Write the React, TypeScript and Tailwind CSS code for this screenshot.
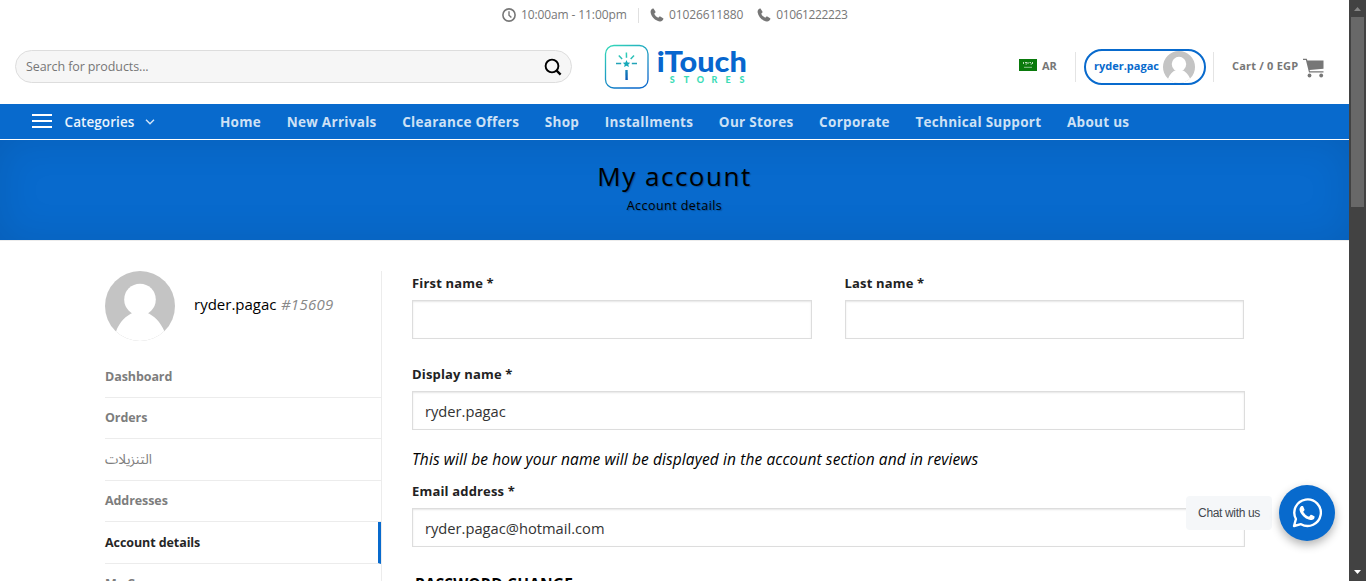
import type { ReactNode } from 'react';

const navItems = [
  'Home',
  'New Arrivals',
  'Clearance Offers',
  'Shop',
  'Installments',
  'Our Stores',
  'Corporate',
  'Technical Support',
  'About us',
];

const accountLinks = ['Dashboard', 'Orders', 'التنزيلات', 'Addresses', 'Account details', 'My Coupons'];

function Avatar({ className, id }: { className: string; id: string }) {
  return (
    <svg viewBox="0 0 70 70" className={className}>
      <clipPath id={id}>
        <circle cx="35" cy="35" r="35" />
      </clipPath>
      <g clipPath={`url(#${id})`}>
        <rect width="70" height="70" fill="#c4c4c4" />
        <circle cx="35" cy="28.500" r="15.800" fill="#fff" />
        <path d="M11 60.500C14.500 51 21 44.500 28.500 41.500h13C49 44.500 55.500 51 59.500 60.500L66 72H4z" fill="#fff" />
      </g>
    </svg>
  );
}

function Phone() {
  return (
    <svg viewBox="0 0 14 14" className="h-[14px] w-[14px] shrink-0" fill="#777">
      <path d="M2.9.6C1.300 1.300.4 2.500.6 4.300 1.200 8.800 5.200 12.800 9.700 13.400c1.800.2 3-.7 3.700-2.300.1-.4 0-.7-.3-.9L10.300 8.500c-.3-.2-.7-.1-.9.1L8.300 9.800C6.400 8.900 5.100 7.600 4.200 5.700l1.200-1.100c.2-.2.3-.6.1-.9L3.800.9C3.600.6 3.300.5 2.900.6z" />
    </svg>
  );
}

function Clock() {
  return (
    <svg viewBox="0 0 14 14" className="h-[14px] w-[14px] shrink-0" fill="none" stroke="#777">
      <circle cx="7" cy="7" r="6.100" strokeWidth="1.600" />
      <path d="M7 3.200V7.200L9.400 9.600" strokeWidth="1.400" />
    </svg>
  );
}

function Logo() {
  return (
    <svg viewBox="0 0 160 46" className="h-[46px] w-[160px]">
      <defs>
        <linearGradient id="frame" x1="0" y1="0" x2=".6" y2="1">
          <stop offset="0" stopColor="#35dcb8" />
          <stop offset="1" stopColor="#0b6acb" />
        </linearGradient>
        <linearGradient id="wand" x1="0" y1="7" x2="0" y2="37" gradientUnits="userSpaceOnUse">
          <stop offset="0" stopColor="#35dcb8" />
          <stop offset="1" stopColor="#0754b8" />
        </linearGradient>
      </defs>
      <rect x="1.500" y="1.500" width="42.500" height="42.500" rx="8.500" fill="none" stroke="url(#frame)" strokeWidth="1.300" />
      <g fill="none" stroke="url(#wand)" strokeWidth="1.500">
        <path d="M22.4 8.500L22.500 13.800M14.800 11.500l3.300 3.600M30 11.500l-3.300 3.600M12 19.500l5.200.1M27.800 19.500l5.200.1" />
        <path d="M22.500 26L22.600 36" strokeWidth="2.400" />
      </g>
      <path d="M22.500 16l1.100 2.400 2.600.3-1.900 1.700.6 2.600-2.400-1.300-2.400 1.300.6-2.600-1.900-1.700 2.600-.3z" fill="#17a9b9" />
      <text
        x="52.800"
        y="27.500"
        textLength="90"
        lengthAdjust="spacingAndGlyphs"
        fill="#0766ce"
        className="font-['Lato'] text-[27.500px] font-black"
      >
        iTouch
      </text>
      <g fill="#3bdcb6" textAnchor="middle" className="font-['Lato'] text-[9px] font-black">
        <text x="68.300" y="39">S</text>
        <text x="82.500" y="39">T</text>
        <text x="96.500" y="39">O</text>
        <text x="110.500" y="39">R</text>
        <text x="124" y="39">E</text>
        <text x="138" y="39">S</text>
      </g>
    </svg>
  );
}

function Flag() {
  return (
    <svg viewBox="0 0 18 12" className="h-3 w-[18px]">
      <rect width="18" height="12" fill="#0a7a0c" />
      <path d="M4.500 3v2M6 3.500h2M6.500 5h1.500M9 3v2M10.500 3.500h1.500M11.500 5h1.500M13.500 3v2" stroke="#cfe6cf" strokeWidth=".9" />
      <path d="M5 8.300h8" stroke="#b0d6b0" strokeWidth=".8" />
    </svg>
  );
}

function Cart() {
  return (
    <svg viewBox="0 0 21 20" className="h-5 w-[21px]" fill="#777">
      <path d="M0 .8h3.800l.6 1.700H20.500v8.300L6.600 12l.4 1.300h13.500v1.100H6L2.900 2H0z" />
      <circle cx="6.500" cy="17.500" r="1.900" />
      <circle cx="18.200" cy="17.500" r="1.900" />
    </svg>
  );
}

function TopBar() {
  return (
    <div className="flex h-[30px] items-center pl-[502px] text-[12px] tracking-[-0.110px] text-[#777]">
      <Clock />
      <span className="ml-[5px] w-[107px]">10:00am - 11:00pm</span>
      <span className="ml-[10px] h-[15px] w-px bg-[#e0e0e0]" />
      <span className="ml-[11px] flex items-center gap-[5px]">
        <Phone />
        01026611880
      </span>
      <span className="ml-[14px] flex items-center gap-[5px]">
        <Phone />
        <span className="tracking-[-0.400px]">01061222223</span>
      </span>
    </div>
  );
}

function Header() {
  return (
    <header className="flex h-[74px] items-center text-[11px] font-bold text-[#777]">
      <div className="-mt-px ml-[15px] flex h-[33px] w-[557px] items-center justify-between rounded-full border border-[#ddd] bg-[#f6f6f6] pr-[9px] pl-[10px]">
        <span className="pt-[2px] text-[12.5px] font-normal tracking-[-0.100px] text-[#777]">Search for products...</span>
        <svg viewBox="0 0 18 18" className="h-[18px] w-[18px]" fill="none" stroke="#000" strokeWidth="1.900">
          <circle cx="8" cy="8" r="6.400" />
          <path d="M12.600 12.600l4 4" strokeWidth="2.300" />
        </svg>
      </div>
      <div className="ml-[32px] w-[160px]">
        <Logo />
      </div>
      <div className="-mt-[2px] ml-[255px] flex w-[38px] items-center gap-[5px]">
        <span className="-mt-[2px]">
          <Flag />
        </span>
        AR
      </div>
      <span className="ml-[18px] h-[30px] w-px bg-[#e4e4e4]" />
      <div className="ml-[8px] flex h-[36px] w-[122px] items-center rounded-full border-2 border-[#086acd] pl-[8px] text-[#086acd]">
        <span className="-mt-[2px] w-[65px]">ryder.pagac</span>
        <Avatar id="avatar-small" className="ml-[4px] h-8 w-8" />
      </div>
      <span className="ml-[7px] h-[30px] w-px bg-[#e4e4e4]" />
      <span className="-mt-[2px] ml-[18px] w-[67px] tracking-[0.200px] whitespace-nowrap">Cart / 0 EGP</span>
      <span className="mt-px ml-[4px]">
        <Cart />
      </span>
    </header>
  );
}

function Nav() {
  return (
    <nav className="flex h-[36px] items-center border-b border-white bg-[#086acd] pl-[32px] text-[13.500px] whitespace-nowrap">
      <span className="-mt-px flex w-[20px] flex-col gap-[4px]">
        <i className="h-[2px] bg-white" />
        <i className="h-[2px] bg-white" />
        <i className="h-[2px] bg-white" />
      </span>
      <span className="mt-[2px] ml-[12.500px] w-[71px] font-semibold tracking-[0.070px] text-[#eaf3fc]">Categories</span>
      <svg viewBox="0 0 10 6" className="ml-[9.500px] h-[6px] w-[10px]" fill="none" stroke="#d5e6f8" strokeWidth="1.400">
        <path d="M1 .8l4 4 4-4" />
      </svg>
      <div className="mt-[2px] ml-[65px] flex gap-[25.600px] font-bold tracking-[0.290px] text-[#cee1f5]">
        {navItems.map((item) => (
          <span key={item}>{item}</span>
        ))}
      </div>
    </nav>
  );
}

function Hero() {
  return (
    <div className="flex h-[101px] flex-col items-center border-b border-[#ececec] bg-[#086acd] pt-[18px] text-black shadow-[inset_0_0_40px_rgba(0,0,0,0.100)] [text-shadow:1px_1px_1px_rgba(0,0,0,0.250)]">
      <h1 className="text-[26px] leading-[36px] font-medium tracking-[1.500px]">My account</h1>
      <p className="mt-[2px] text-[12.500px] leading-[20px] tracking-[0.450px]">Account details</p>
    </div>
  );
}

function Sidebar() {
  return (
    <aside className="w-[277px] shrink-0 border-r border-[#ececec]">
      <div className="flex items-center">
        <Avatar id="avatar-large" className="h-[70px] w-[70px]" />
        <span className="-mt-[4px] ml-[19px] text-[15px] text-black">
          ryder.pagac <em className="ml-[0.500px] tracking-[0.300px] text-[#888]">#15609</em>
        </span>
      </div>
      <ul className="mt-[15px] text-[12.500px] font-bold tracking-[-0.080px] text-[#7d7d7d]">
        {accountLinks.map((link) => (
          <li
            key={link}
            className={
              link === 'Account details'
                ? 'flex h-[41.500px] items-center border-r-[3px] border-b border-r-[#086acd] border-b-[#ececec] pt-[2px] text-[#262626]'
                : 'flex h-[41.500px] items-center border-b border-[#ececec] pt-[2px]'
            }
          >
            {link === 'التنزيلات' ? (
              <span dir="rtl" className="font-['Noto_Sans_Arabic','DejaVu_Sans',sans-serif] text-[13.500px] font-normal tracking-normal">
                {link}
              </span>
            ) : (
              link
            )}
          </li>
        ))}
      </ul>
    </aside>
  );
}

function Field({ label, children }: { label: string; children?: ReactNode }) {
  return (
    <div className="flex-1">
      <div className="h-[29px] pt-[1px] text-[13px] leading-[22px] font-bold tracking-[0.170px] text-[#222]">{label}</div>
      <div className="flex h-[39px] items-center border border-[#ddd] bg-white px-[12px] pt-[2px] text-[14.700px] text-[#333] shadow-[inset_0_1px_2px_rgba(0,0,0,0.100)]">
        {children}
      </div>
    </div>
  );
}

function AccountForm() {
  return (
    <form className="ml-[30px] w-[833px]">
      <div className="flex gap-[33px] pr-px">
        <Field label="First name *" />
        <Field label="Last name *" />
      </div>
      <div className="mt-[23px]">
        <Field label="Display name *">ryder.pagac</Field>
      </div>
      <p className="mt-[16px] text-[15.500px] leading-[26px] tracking-[0.110px] whitespace-nowrap text-black italic">
        This will be how your name will be displayed in the account section and in reviews
      </p>
      <div className="mt-[7px]">
        <Field label="Email address *">ryder.pagac@hotmail.com</Field>
      </div>
      <h3 className="mt-[25px] ml-[3px] text-[15.500px] leading-[24px] font-bold tracking-[0.170px] text-black">PASSWORD CHANGE</h3>
    </form>
  );
}

function ChatWidget() {
  return (
    <div className="absolute top-[485px] left-[1186px] flex items-center">
      <div className="flex h-[34px] w-[86px] items-center justify-center rounded-[4px] bg-[#f5f7f9] font-['Liberation_Sans',sans-serif] text-[12px] tracking-[-0.350px] whitespace-nowrap text-[#43474e]">
        Chat with us
      </div>
      <div className="ml-[7px] flex h-[56px] w-[56px] items-center justify-center rounded-full bg-[#086acd] shadow-[0_4px_10px_rgba(0,0,0,0.300)]">
        <svg viewBox="0 0 24 24" className="h-[30px] w-[30px]" fill="#fff">
          <path d="M17.472 14.382c-.297-.149-1.758-.867-2.030-.967-.273-.099-.471-.148-.670.150-.197.297-.767.966-.940 1.164-.173.199-.347.223-.644.075-.297-.150-1.255-.463-2.390-1.475-.883-.788-1.480-1.761-1.653-2.059-.173-.297-.018-.458.130-.606.134-.133.298-.347.446-.520.149-.174.198-.298.298-.497.099-.198.050-.371-.025-.520-.075-.149-.669-1.612-.916-2.207-.242-.579-.487-.500-.669-.510-.173-.008-.371-.010-.570-.010-.198 0-.520.074-.792.372-.272.297-1.040 1.016-1.040 2.479 0 1.462 1.065 2.875 1.213 3.074.149.198 2.096 3.200 5.077 4.487.709.306 1.262.489 1.694.625.712.227 1.360.195 1.871.118.571-.085 1.758-.719 2.006-1.413.248-.694.248-1.289.173-1.413-.074-.124-.272-.198-.570-.347" />
          <path
            d="M1.600 22.400l1.550-5.600A10.600 10.600 0 1 1 7.200 20.950z"
            fill="none"
            stroke="#fff"
            strokeWidth="1.900"
            strokeLinejoin="round"
          />
        </svg>
      </div>
    </div>
  );
}

function Scrollbar() {
  return (
    <div className="flex h-full w-[17px] shrink-0 flex-col items-center bg-[#424242]">
      <svg viewBox="0 0 17 17" className="h-[17px] w-[17px] shrink-0">
        <path d="M5 11h7L8.500 7z" fill="#868686" />
      </svg>
      <div className="h-[190px] w-[13px] bg-[#686868]" />
      <svg viewBox="0 0 17 17" className="mt-auto h-[17px] w-[17px] shrink-0">
        <path d="M5 6h7L8.500 10z" fill="#fff" />
      </svg>
    </div>
  );
}

export default function App() {
  return (
    <div className="relative flex h-[581px] w-[1366px] overflow-hidden bg-white font-['Open_Sans','Noto_Sans',sans-serif]">
      <div className="h-full w-[1349px] overflow-hidden">
        <TopBar />
        <Header />
        <Nav />
        <Hero />
        <main className="flex pt-[30px] pl-[105px]">
          <Sidebar />
          <AccountForm />
        </main>
      </div>
      <Scrollbar />
      <ChatWidget />
    </div>
  );
}
